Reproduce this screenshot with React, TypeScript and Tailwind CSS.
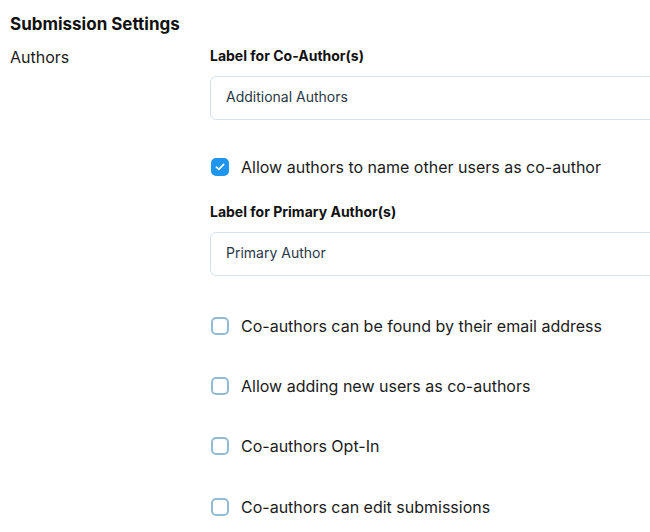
import React, { useState } from 'react';

type Option = { id: string; label: string };

const options: Option[] = [
  { id: 'email', label: 'Co-authors can be found by their email address' },
  { id: 'newUsers', label: 'Allow adding new users as co-authors' },
  { id: 'optIn', label: 'Co-authors Opt-In' },
  { id: 'edit', label: 'Co-authors can edit submissions' },
];

function Checkbox({ checked, onChange, label }: { checked: boolean; onChange: () => void; label: string }) {
  return (
    <label className="flex items-center h-6 cursor-pointer">
      <span
        onClick={onChange}
        className={
          checked
            ? 'ml-px w-[18px] h-[18px] rounded-[5px] bg-[#1e96f0] flex items-center justify-center'
            : 'ml-px w-[18px] h-[18px] rounded-[5px] border-2 border-[#92bcd6] bg-white'
        }
      >
        {checked && (
          <svg width="10" height="8" viewBox="0 0 10 8" fill="none">
            <path d="M1.3 4.2 L3.8 6.4 L8.7 1.4" stroke="white" strokeWidth="1.6" strokeLinecap="round" strokeLinejoin="round" />
          </svg>
        )}
      </span>
      <span className="ml-3 text-base text-[#1b1b1b]">{label}</span>
    </label>
  );
}

export default function App() {
  const [coAuthorLabel, setCoAuthorLabel] = useState('Additional Authors');
  const [primaryLabel, setPrimaryLabel] = useState('Primary Author');
  const [allowCoAuthor, setAllowCoAuthor] = useState(true);
  const [flags, setFlags] = useState<Record<string, boolean>>({});

  return (
    <div className="w-[650px] h-[532px] overflow-hidden bg-white font-['Inter',sans-serif] text-[#111]">
      <div className="pl-[10px] pt-[12px]">
        <h1 className="text-[17px] leading-6 font-bold">Submission Settings</h1>

        <div className="flex mt-[9px]">
          <div className="w-[200px] text-base leading-6 text-[#1b1b1b]">Authors</div>

          <div className="flex-1 min-w-0">
            <div className="mt-px text-[14px] leading-5 font-bold">Label for Co-Author(s)</div>
            <input
              value={coAuthorLabel}
              onChange={(e) => setCoAuthorLabel(e.target.value)}
              className="mt-[10px] w-[520px] h-[44px] pl-[15px] pb-[3px] rounded-md border border-[#d3e2ed] text-sm text-[#2a3847] outline-none"
            />

            <div className="mt-[35px]">
              <Checkbox
                checked={allowCoAuthor}
                onChange={() => setAllowCoAuthor(!allowCoAuthor)}
                label="Allow authors to name other users as co-author"
              />
            </div>

            <div className="mt-[23px] text-[14px] leading-5 font-bold">Label for Primary Author(s)</div>
            <input
              value={primaryLabel}
              onChange={(e) => setPrimaryLabel(e.target.value)}
              className="mt-[10px] w-[520px] h-[44px] pl-[15px] pb-[3px] rounded-md border border-[#d3e2ed] text-sm text-[#2a3847] outline-none"
            />

            <div className="mt-[38px] flex flex-col gap-9">
              {options.map((o, i) => (
                <div key={o.id} className={i === 3 ? 'mt-px' : ''}>
                  <Checkbox
                    checked={!!flags[o.id]}
                    onChange={() => setFlags({ ...flags, [o.id]: !flags[o.id] })}
                    label={o.label}
                  />
                </div>
              ))}
            </div>
          </div>
        </div>
      </div>
    </div>
  );
}
